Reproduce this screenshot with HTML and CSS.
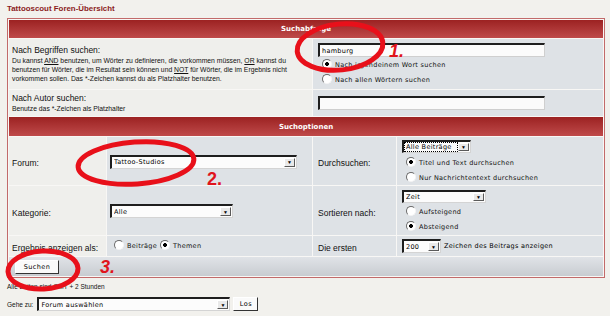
FILE: index.html
```html
<!DOCTYPE html>
<html lang="de">
<head>
  <meta charset="UTF-8">
  <title>Tattooscout Foren-Übersicht - Suche</title>
  <link rel="stylesheet" href="styles.css">
</head>
<body>
  <div class="maintitle">Tattooscout Foren-Übersicht</div>

  <table class="forumline">
    <colgroup>
      <col class="c1"><col class="c2"><col class="c3"><col class="c4">
    </colgroup>
    <tr class="h-head">
      <th class="thHead" colspan="4">Suchabfrage</th>
    </tr>
    <tr class="h-terms">
      <td class="row1 pad" colspan="2">
        <div class="gen">Nach Begriffen suchen:</div>
        <div class="gensmall">Du kannst <u>AND</u> benutzen, um Wörter zu definieren, die vorkommen müssen, <u>OR</u> kannst du benutzen für Wörter, die im Resultat sein können und <u>NOT</u> für Wörter, die im Ergebnis nicht vorkommen sollen. Das *-Zeichen kannst du als Platzhalter benutzen.</div>
      </td>
      <td class="row2 pad-r top" colspan="2">
        <input class="post" type="text" value="hamburg">
        <label class="opt"><input type="radio" name="terms" checked> Nach irgendeinem Wort suchen</label>
        <label class="opt"><input type="radio" name="terms"> Nach allen Wörtern suchen</label>
      </td>
    </tr>
    <tr class="h-author">
      <td class="row1 pad" colspan="2">
        <div class="gen">Nach Autor suchen:</div>
        <div class="gensmall">Benutze das *-Zeichen als Platzhalter</div>
      </td>
      <td class="row2 pad-r" colspan="2">
        <input class="post" type="text" value="">
      </td>
    </tr>
    <tr class="h-head2">
      <th class="thHead" colspan="4">Suchoptionen</th>
    </tr>
    <tr class="h-forum">
      <td class="row1 pad"><span class="gen">Forum:</span></td>
      <td class="row2 pad-s">
        <span class="select w-forum"><select><option>Tattoo-Studios</option></select><span class="arrow">&#9660;</span></span>
      </td>
      <td class="row2 pad-r"><span class="gen">Durchsuchen:</span></td>
      <td class="row2 pad-r">
        <span class="select w-time focus"><select><option>Alle Beiträge</option></select><span class="arrow">&#9660;</span></span>
        <label class="opt"><input type="radio" name="fields" checked> Titel und Text durchsuchen</label>
        <label class="opt"><input type="radio" name="fields"> Nur Nachrichtentext durchsuchen</label>
      </td>
    </tr>
    <tr class="h-cat">
      <td class="row1 pad"><span class="gen">Kategorie:</span></td>
      <td class="row2 pad-s">
        <span class="select w-cat"><select><option>Alle</option></select><span class="arrow">&#9660;</span></span>
      </td>
      <td class="row2 pad-r"><span class="gen">Sortieren nach:</span></td>
      <td class="row2 pad-r">
        <span class="select w-sort"><select><option>Zeit</option></select><span class="arrow">&#9660;</span></span>
        <label class="opt"><input type="radio" name="dir"> Aufsteigend</label>
        <label class="opt"><input type="radio" name="dir" checked> Absteigend</label>
      </td>
    </tr>
    <tr class="h-result">
      <td class="row1 pad"><span class="gen">Ergebnis&nbsp;anzeigen&nbsp;als:</span></td>
      <td class="row2 pad-s">
        <div class="line"><label class="opt"><input type="radio" name="show"> Beiträge</label><label class="opt tight"><input type="radio" name="show" checked> Themen</label></div>
      </td>
      <td class="row2 pad-r"><span class="gen">Die ersten</span></td>
      <td class="row2 pad-r">
        <span class="line">
          <span class="select w-chars"><select><option>200</option></select><span class="arrow">&#9660;</span></span>
          <span class="genmed">Zeichen des Beitrags anzeigen</span>
        </span>
      </td>
    </tr>
    <tr class="h-foot">
      <td class="catBottom" colspan="4"><button class="btn btn-search" type="button">Suchen</button></td>
    </tr>
  </table>

  <div class="timezone">Alle Zeiten sind GMT + 2 Stunden</div>

  <div class="jumpbox">
    <span class="jump-label">Gehe zu:</span>
    <span class="select w-jump"><select><option>Forum auswählen</option></select><span class="arrow">&#9660;</span></span>
    <button class="btn btn-go" type="button">Los</button>
  </div>

  <svg class="marks" width="610" height="316" viewBox="0 0 610 316">
    <ellipse cx="340" cy="47" rx="43" ry="23" transform="rotate(-6 340 47)"/>
    <ellipse cx="136" cy="163" rx="58" ry="21" transform="rotate(-4 136 163)"/>
    <ellipse cx="43" cy="270" rx="35" ry="19" transform="rotate(-3 43 270)"/>
    <text x="389" y="57" class="it">1.</text>
    <text x="207" y="185">2.</text>
    <text x="100" y="273" class="it">3.</text>
  </svg>
</body>
</html>
```

FILE: styles.css
```css
body {
  margin: 0;
  padding: 4px 5px 0 7px;
  background: #f2f1ed;
  font-family: "Liberation Sans", Arial, sans-serif;
  color: #000;
}
.maintitle {
  font-size: 7.9px;
  font-weight: bold;
  color: #8b1c1c;
  line-height: 10px;
  height: 14px;
}
.forumline {
  width: 598px;
  table-layout: fixed;
  border-collapse: separate;
  border-spacing: 1px;
  border: 1px solid #c26a6a;
  background: #f8f7f5;
}
.c1 { width: 97px; }
.c2 { width: 205px; }
.c3 { width: 83px; }
.c4 { width: 206px; }

.h-head { height: 18px; }
.h-terms { height: 50px; }
.h-author { height: 26px; }
.h-head2 { height: 19px; }
.h-forum { height: 48px; }
.h-cat { height: 49px; }
.h-result { height: 20px; }
.h-foot { height: 19px; }

td, th {
  padding: 0;
}
.thHead {
  background: linear-gradient(#9c2222, #bf4a4a);
  color: #fff;
  font: bold 7px "DejaVu Sans", Verdana, sans-serif;
  text-align: center;
}
.row1 {
  background: #efefec;
}
.row2 {
  background: #dee2e6;
}
.catBottom {
  background: linear-gradient(#e0e3e7, #c8ccd1);
  padding-left: 6px;
}
.pad {
  padding-left: 3px;
}
.pad-s {
  padding-left: 3px;
}
.pad-r {
  padding-left: 5px;
}
.top {
  vertical-align: top;
  padding-top: 4px;
}
.gen {
  font-size: 8.5px;
  line-height: 11px;
  color: #111;
}
.gensmall {
  font-size: 6.8px;
  line-height: 9px;
  color: #111;
}
.genmed {
  font: 6.5px "DejaVu Sans", Verdana, sans-serif;
  letter-spacing: 0.3px;
  margin-left: 3px;
}

/* text fields */
.post {
  display: block;
  box-sizing: border-box;
  width: 227px;
  height: 14px;
  margin: 0;
  padding: 0 0 0 2px;
  border-top: 2px solid #1e1e1e;
  border-left: 2px solid #1e1e1e;
  border-right: 1px solid #cfcfcf;
  border-bottom: 1px solid #cfcfcf;
  background: #fbfbfb;
  font: 6.5px "DejaVu Sans", Verdana, sans-serif;
  letter-spacing: 0.3px;
  color: #000;
  outline: none;
}

/* radio options */
.opt {
  display: flex;
  align-items: center;
  height: 15px;
  font: 6.5px "DejaVu Sans", Verdana, sans-serif;
  letter-spacing: 0.3px;
  color: #111;
}
.opt input {
  appearance: none;
  -webkit-appearance: none;
  box-sizing: border-box;
  width: 10px;
  height: 10px;
  margin: 0 3px 2px 4px;
  border-radius: 50%;
  border: 1px solid;
  border-color: #6a6a6a #f4f4f4 #f4f4f4 #6a6a6a;
  background: #fff;
}
.opt.tight input {
  margin-left: 3px;
}
.opt input:checked {
  background: radial-gradient(circle, #000 0 1.6px, #fff 2.2px);
}

/* drop-downs */
.select {
  display: inline-flex;
  box-sizing: border-box;
  height: 14px;
  border-top: 2px solid #1e1e1e;
  border-left: 2px solid #1e1e1e;
  border-right: 1px solid #d4d4d4;
  border-bottom: 1px solid #d4d4d4;
  background: #fcfcfc;
  vertical-align: middle;
}
.select select {
  appearance: none;
  -webkit-appearance: none;
  flex: 1;
  min-width: 0;
  height: 100%;
  margin: 0;
  padding: 0 0 0 2px;
  border: 0;
  background: transparent;
  font: 6.5px "DejaVu Sans", Verdana, sans-serif;
  letter-spacing: 0.3px;
  color: #000;
  outline: none;
}
.select.focus select {
  outline: 1px dotted #000;
  outline-offset: -1px;
}
.arrow {
  display: flex;
  align-items: center;
  justify-content: center;
  width: 9px;
  margin: 1px 1px 1px 0;
  background: #e9e9e9;
  border: 1px solid;
  border-color: #fff #5a5a5a #5a5a5a #fff;
  font-size: 5px;
  color: #000;
}
.w-forum { width: 187px; }
.w-cat { width: 123px; }
.w-time { width: 69px; height: 13px; }
.w-sort { width: 84px; height: 13px; }
.w-chars { width: 39px; }
.w-jump { width: 193px; }

.line {
  display: flex;
  align-items: center;
}

/* buttons */
.btn {
  box-sizing: border-box;
  height: 14px;
  margin: 0;
  padding: 0 7px;
  background: #fafafa;
  border: 1px solid;
  border-color: #fff #333 #333 #fff;
  font: 6.5px "DejaVu Sans", Verdana, sans-serif;
  letter-spacing: 0.4px;
  color: #000;
  vertical-align: middle;
}
.btn-search {
  width: 44px;
  height: 14px;
}
.btn-go {
  width: 25px;
  padding: 0;
}

.timezone {
  margin-top: 4px;
  font-size: 6.5px;
  line-height: 10px;
  color: #111;
}
.jumpbox {
  display: flex;
  align-items: center;
  gap: 3px;
  margin-top: 5px;
  height: 14px;
}
.jump-label {
  font-size: 6.5px;
  color: #111;
  margin-right: 1px;
}

/* annotations drawn over the screenshot */
.marks {
  position: absolute;
  top: 0;
  left: 0;
  pointer-events: none;
}
.marks ellipse {
  fill: none;
  stroke: #e8101a;
  stroke-width: 5;
}
.marks text {
  fill: #e0141c;
  font: bold 18px "Liberation Sans", Arial, sans-serif;
}
.marks text.it {
  font-style: italic;
}
```
